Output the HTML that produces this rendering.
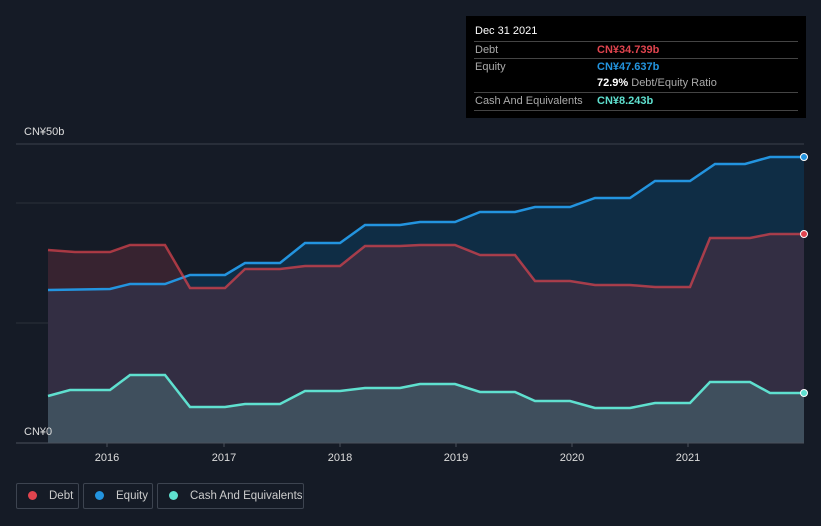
<!DOCTYPE html>
<html><head><meta charset="utf-8"><style>
body{margin:0;width:821px;height:526px;background:#151b26;font-family:"Liberation Sans","Noto Sans CJK SC",sans-serif;overflow:hidden;position:relative}
.tt{position:absolute;left:466px;top:16px;width:340px;height:102px;background:#000;color:#fff;font-size:11px}
.tt .h{position:absolute;left:9px;top:9px;font-size:11px}
.row{position:absolute;left:8px;width:324px;border-top:1px solid #444;height:16px;line-height:16px}
.row span{position:absolute;white-space:nowrap}
.lab{left:1px;color:#aaa}.val{left:123px;font-weight:bold}
.leg{position:absolute;top:483px;height:26px;border:1px solid #3d4450;border-radius:2px;color:#ccc;font-size:11.5px;line-height:24px;box-sizing:border-box;white-space:nowrap}
.dot{display:inline-block;width:9px;height:9px;border-radius:50%;margin:0 12px 0 11px;vertical-align:-1px}
</style></head><body>
<svg width="821" height="526" style="position:absolute;left:0;top:0">
<line x1="16" y1="144" x2="804" y2="144" stroke="#3a414c"/>
<line x1="16" y1="203" x2="804" y2="203" stroke="#2a303a"/>
<line x1="16" y1="323" x2="804" y2="323" stroke="#2a303a"/>
<path d="M48,290 L110,289 L130,284 L165,284 L190,275 L225,275 L245,263 L280,263 L305,243 L340,243 L365,225 L400,225 L420,222 L455,222 L480,212 L515,212 L535,207 L570,207 L595,198 L630,198 L655,181 L690,181 L715,164 L745,164 L770,157 L804,157 L804,443 L48,443Z" fill="#0f2d45"/>
<path d="M48,250 L75,252 L110,252 L130,245 L165,245 L190,288 L225,288 L245,269 L280,269 L305,266 L340,266 L365,246 L400,246 L420,245 L455,245 L480,255 L515,255 L535,281 L570,281 L595,285 L630,285 L655,287 L690,287 L710,238 L750,238 L770,234 L804,234 L804,443 L48,443Z" fill="rgba(110,50,65,0.38)"/>
<path d="M48,396 L70,390 L110,390 L130,375 L165,375 L190,407 L225,407 L245,404 L280,404 L305,391 L340,391 L365,388 L400,388 L420,384 L455,384 L480,392 L515,392 L535,401 L570,401 L595,408 L630,408 L655,403 L690,403 L710,382 L750,382 L770,393 L804,393 L804,443 L48,443Z" fill="rgba(90,150,150,0.32)"/>
<path d="M48,290 L110,289 L130,284 L165,284 L190,275 L225,275 L245,263 L280,263 L305,243 L340,243 L365,225 L400,225 L420,222 L455,222 L480,212 L515,212 L535,207 L570,207 L595,198 L630,198 L655,181 L690,181 L715,164 L745,164 L770,157 L804,157" fill="none" stroke="#2394df" stroke-width="2.5"/>
<path d="M48,250 L75,252 L110,252 L130,245 L165,245 L190,288 L225,288 L245,269 L280,269 L305,266 L340,266 L365,246 L400,246 L420,245 L455,245 L480,255 L515,255 L535,281 L570,281 L595,285 L630,285 L655,287 L690,287 L710,238 L750,238 L770,234 L804,234" fill="none" stroke="#e0444e" stroke-opacity="0.7" stroke-width="2.5"/>
<path d="M48,396 L70,390 L110,390 L130,375 L165,375 L190,407 L225,407 L245,404 L280,404 L305,391 L340,391 L365,388 L400,388 L420,384 L455,384 L480,392 L515,392 L535,401 L570,401 L595,408 L630,408 L655,403 L690,403 L710,382 L750,382 L770,393 L804,393" fill="none" stroke="#5fe0cf" stroke-width="2.5"/>
<circle cx="804" cy="157" r="3.5" fill="#2394df" stroke="#fff"/>
<circle cx="804" cy="234" r="3.5" fill="#e0444e" stroke="#fff"/>
<circle cx="804" cy="393" r="3.5" fill="#5fe0cf" stroke="#fff"/>
<rect x="16" y="423" width="32" height="20" fill="#151b26"/>
<line x1="16" y1="443" x2="804" y2="443" stroke="#4a515c"/>
<g stroke="#4a515c"><line x1="107" y1="443" x2="107" y2="447"/><line x1="224" y1="443" x2="224" y2="447"/><line x1="340" y1="443" x2="340" y2="447"/><line x1="456" y1="443" x2="456" y2="447"/><line x1="572" y1="443" x2="572" y2="447"/><line x1="688" y1="443" x2="688" y2="447"/></g>
<g fill="#ddd" font-size="11" font-family="Liberation Sans,Noto Sans CJK SC,sans-serif" text-anchor="middle">
<text x="107" y="461">2016</text><text x="224" y="461">2017</text><text x="340" y="461">2018</text><text x="456" y="461">2019</text><text x="572" y="461">2020</text><text x="688" y="461">2021</text></g>
<text x="24" y="135" fill="#ddd" font-size="11">CN¥50b</text>
<text x="24" y="435" fill="#ddd" font-size="11">CN¥0</text>
</svg>
<div class="tt"><div class="h">Dec 31 2021</div>
<div class="row" style="top:25px"><span class="lab">Debt</span><span class="val" style="color:#e0444e">CN¥34.739b</span></div>
<div class="row" style="top:42px"><span class="lab">Equity</span><span class="val" style="color:#2394df">CN¥47.637b</span></div>
<div class="row" style="top:59px;border-top:none"><span class="val" style="color:#fff">72.9% <b style="color:#aaa;font-weight:normal">Debt/Equity Ratio</b></span></div>
<div class="row" style="top:76px"><span class="lab">Cash And Equivalents</span><span class="val" style="color:#5fe0cf">CN¥8.243b</span></div>
<div class="row" style="top:94px;height:0"></div>
</div>
<div class="leg" style="left:16px;width:63px"><span class="dot" style="background:#e0444e"></span>Debt</div>
<div class="leg" style="left:83px;width:70px"><span class="dot" style="background:#2394df"></span>Equity</div>
<div class="leg" style="left:157px;width:147px"><span class="dot" style="background:#5fe0cf"></span>Cash And Equivalents</div>
</body></html>
